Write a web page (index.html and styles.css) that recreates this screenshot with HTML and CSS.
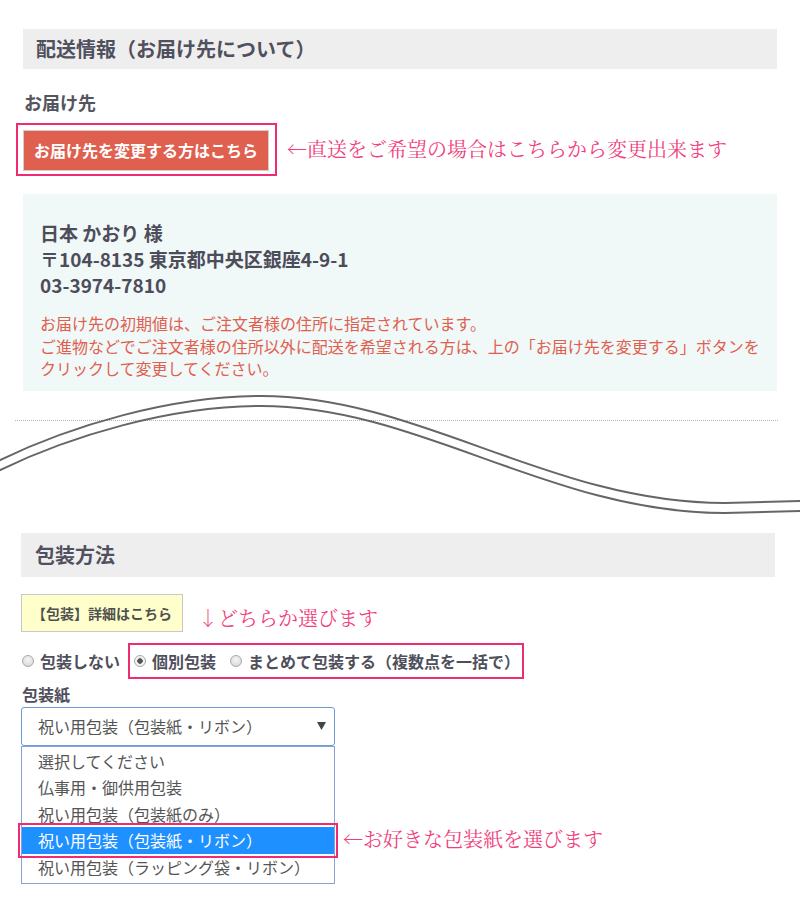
FILE: index.html
```html
<!DOCTYPE html>
<html lang="ja">
<head>
<meta charset="utf-8">
<title>配送情報・包装方法</title>
<link rel="stylesheet" href="styles.css">
</head>
<body>
<div class="page">
  <section class="sec sec-delivery">
    <h2 class="sec-title">配送情報（お届け先について）</h2>
    <h3 class="sub-title">お届け先</h3>
    <div class="note-row">
      <div class="mark">
        <a class="btn-change" href="#">お届け先を変更する方はこちら</a>
      </div>
      <span class="note note-change">←直送をご希望の場合はこちらから変更出来ます</span>
    </div>
    <div class="addr-box">
      <p class="addr">日本 かおり 様<br>〒104-8135 東京都中央区銀座4-9-1<br>03-3974-7810</p>
      <p class="addr-note">お届け先の初期値は、ご注文者様の住所に指定されています。<br>ご進物などでご注文者様の住所以外に配送を希望される方は、上の「お届け先を変更する」ボタンを<br>クリックして変更してください。</p>
    </div>
    <div class="dots"></div>
  </section>

  <svg class="wave" width="800" height="130" viewBox="0 0 800 130">
    <g fill="none" stroke="#666" stroke-width="2">
      <path d="M-2,71 C 70,36 170,6 261,6 C 420,6 550,113 725,113 L 802,111"/>
      <path d="M-2,81 C 70,46 170,16 261,16 C 420,16 550,123 725,123 L 802,121"/>
    </g>
  </svg>

  <section class="sec sec-wrap">
    <h2 class="sec-title tall">包装方法</h2>
    <div class="note-row detail-row">
      <a class="btn-detail" href="#">【包装】詳細はこちら</a>
      <span class="note note-choose">↓どちらか選びます</span>
    </div>
    <div class="radio-row">
      <label class="radio"><input type="radio" name="wrap"><span>包装しない</span></label>
      <div class="mark mark-radios">
        <label class="radio"><input type="radio" name="wrap" checked><span>個別包装</span></label>
        <label class="radio"><input type="radio" name="wrap"><span>まとめて包装する（複数点を一括で）</span></label>
      </div>
    </div>
    <div class="field-label">包装紙</div>
    <div class="select-row">
      <div class="dropdown">
        <div class="select-box">
          <span>祝い用包装（包装紙・リボン）</span>
          <svg class="caret" width="9" height="8" viewBox="0 0 9 8"><path d="M0,0 H9 L4.5,8 Z" fill="#444"/></svg>
        </div>
        <ul class="options">
          <li>選択してください</li>
          <li>仏事用・御供用包装</li>
          <li>祝い用包装（包装紙のみ）</li>
          <li class="selected">祝い用包装（包装紙・リボン）</li>
          <li>祝い用包装（ラッピング袋・リボン）</li>
        </ul>
      </div>
      <span class="note note-paper">←お好きな包装紙を選びます</span>
    </div>
  </section>
</div>
</body>
</html>
```
FILE: styles.css
```css
html, body {
  margin: 0;
  padding: 0;
  background: #fff;
}

body {
  font-family: "Noto Sans CJK JP", "Noto Sans", sans-serif;
  color: #555;
}

.page {
  width: 800px;
  padding-top: 29px;
}

.sec {
  width: 754px;
}

.sec-delivery {
  margin-left: 23px;
}

.sec-wrap {
  margin-left: 21px;
  margin-top: 13px;
}

.sec-title {
  margin: 0;
  height: 40px;
  line-height: 40px;
  padding-left: 13px;
  background: #eeeeee;
  font-size: 20px;
  font-weight: 700;
  color: #50505e;
}

.sec-title.tall {
  height: 44px;
  line-height: 44px;
  padding-left: 14px;
}

.sub-title {
  margin: 20px 0 0 1px;
  font-size: 18px;
  line-height: 26px;
  font-weight: 700;
  color: #55555f;
}

/* pink highlight frame */
.mark {
  border: 2px solid #ee2c74;
}

.note-row {
  display: flex;
  align-items: center;
}

.note-row > .mark {
  margin-top: 8px;
  margin-left: -7px;
  padding: 5px 6px 3px 5px;
}

.btn-change {
  display: block;
  height: 39px;
  line-height: 39px;
  padding: 0 10px;
  background: #e0604f;
  border: 1px solid #cfcfcf;
  color: #fff;
  font-size: 16px;
  font-weight: 700;
  text-decoration: none;
}

.note {
  font-family: "Noto Serif CJK JP", "Noto Sans CJK JP", serif;
  font-size: 20px;
  line-height: 30px;
  color: #f0407c;
  white-space: nowrap;
}

.note-change {
  margin-left: 10px;
  margin-top: 6px;
}

.addr-box {
  margin-top: 18px;
  padding: 26px 17px 11px;
  background: #f0f8f8;
}

.addr {
  margin: 0;
  font-size: 19px;
  line-height: 26px;
  font-weight: 700;
  color: #4d4d5a;
}

.addr-note {
  margin: 14px 0 0;
  font-size: 16px;
  line-height: 22.5px;
  color: #e0604f;
}

.dots {
  margin: 29px 0 0 -8px;
  width: 763px;
  border-top: 1px dotted #b5b5b5;
}

.wave {
  display: block;
  margin-top: -31px;
}

.detail-row {
  margin-top: 16px;
}

.btn-detail {
  display: block;
  height: 36px;
  line-height: 36px;
  padding: 0 10px;
  background: #ffffcc;
  border: 1px solid #c8c8c8;
  color: #505050;
  font-size: 14px;
  font-weight: 700;
  text-decoration: none;
}

.note-choose {
  margin-left: 15px;
  margin-top: 10px;
}

.radio-row {
  display: flex;
  align-items: center;
  margin-top: 10px;
}

.radio {
  display: flex;
  align-items: center;
  gap: 6px;
  font-size: 16px;
  font-weight: 700;
  line-height: 32px;
  color: #4f4f5c;
}

.radio input {
  appearance: none;
  -webkit-appearance: none;
  margin: 0 0 0 1px;
  width: 12px;
  height: 12px;
  border-radius: 50%;
  border: 1px solid #a8a8a8;
  background: radial-gradient(circle at 50% 35%, #f4f4f4 0%, #d6d6d6 100%);
}

.radio input:checked {
  background: radial-gradient(circle, #555 0 2.5px, #f2f2f2 3px);
}

.mark-radios {
  display: flex;
  align-items: center;
  gap: 13px;
  margin-left: 8px;
  padding: 0 2px 0 3px;
}

.field-label {
  margin-top: 3px;
  margin-left: 1px;
  font-size: 16px;
  line-height: 24px;
  font-weight: 700;
  color: #4f4f5c;
}

.select-row {
  display: flex;
  margin-top: 1px;
}

.dropdown {
  width: 314px;
}

.select-box {
  display: flex;
  align-items: center;
  justify-content: space-between;
  box-sizing: border-box;
  height: 39px;
  padding: 0 8px 0 16px;
  border: 1px solid #6b9bd6;
  border-radius: 3px;
  font-size: 16px;
  color: #555;
}

.caret {
  display: block;
}

.options {
  list-style: none;
  margin: 0;
  padding: 1px 0 2.5px;
  border: 1px solid #8aa2d6;
}

.options li {
  height: 26.5px;
  line-height: 26.5px;
  padding-left: 16px;
  font-size: 16px;
  color: #555;
}

.options li.selected {
  background: #1e90ff;
  color: #fff;
  outline: 2px solid #ee2c74;
  outline-offset: 2px;
}

.note-paper {
  align-self: flex-end;
  margin: 0 0 30px 8px;
}
```
